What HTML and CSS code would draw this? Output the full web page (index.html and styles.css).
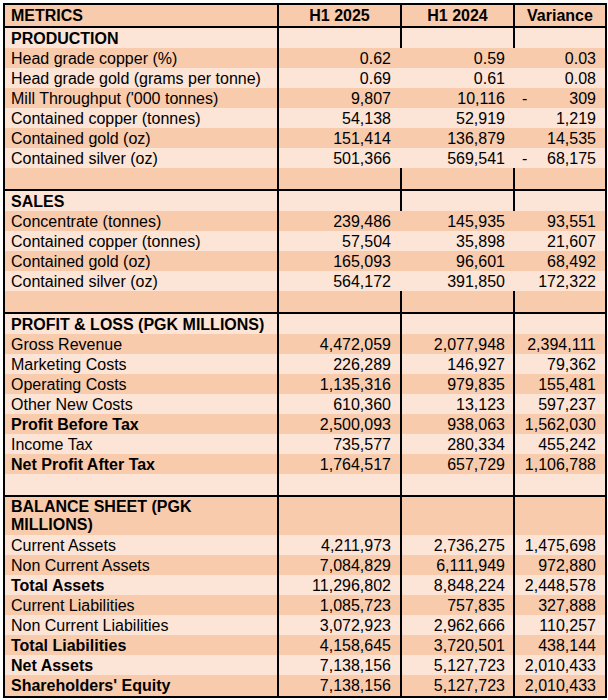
FILE: index.html
```html
<!DOCTYPE html>
<html lang="en">
<head>
<meta charset="utf-8">
<title>Metrics H1 2025 vs H1 2024</title>
<link rel="stylesheet" href="styles.css">
</head>
<body>
<table class="fin">
  <colgroup>
    <col class="c1"><col class="c2"><col class="c3"><col class="c4">
  </colgroup>
  <tbody>
    <tr class="hdr ln"><th class="lbl">METRICS</th><th class="ctr">H1 2025</th><th class="ctr">H1 2024</th><th class="ctr">Variance</th></tr>

    <tr class="sec ln"><td class="lbl b">PRODUCTION</td><td class="num a"></td><td class="num"></td><td class="num v"></td></tr>
    <tr><td class="lbl">Head grade copper (%)</td><td class="num a">0.62</td><td class="num">0.59</td><td class="num v">0.03</td></tr>
    <tr><td class="lbl">Head grade gold (grams per tonne)</td><td class="num a">0.69</td><td class="num">0.61</td><td class="num v">0.08</td></tr>
    <tr><td class="lbl">Mill Throughput ('000 tonnes)</td><td class="num a">9,807</td><td class="num">10,116</td><td class="num v"><span class="neg">-</span>309</td></tr>
    <tr><td class="lbl">Contained copper (tonnes)</td><td class="num a">54,138</td><td class="num">52,919</td><td class="num v">1,219</td></tr>
    <tr><td class="lbl">Contained gold (oz)</td><td class="num a">151,414</td><td class="num">136,879</td><td class="num v">14,535</td></tr>
    <tr><td class="lbl">Contained silver (oz)</td><td class="num a">501,366</td><td class="num">569,541</td><td class="num v"><span class="neg">-</span>68,175</td></tr>
    <tr class="blank ln"><td class="lbl">&nbsp;</td><td class="num a"></td><td class="num"></td><td class="num v"></td></tr>

    <tr class="sec ln"><td class="lbl b">SALES</td><td class="num a"></td><td class="num"></td><td class="num v"></td></tr>
    <tr><td class="lbl">Concentrate (tonnes)</td><td class="num a">239,486</td><td class="num">145,935</td><td class="num v">93,551</td></tr>
    <tr><td class="lbl">Contained copper (tonnes)</td><td class="num a">57,504</td><td class="num">35,898</td><td class="num v">21,607</td></tr>
    <tr><td class="lbl">Contained gold (oz)</td><td class="num a">165,093</td><td class="num">96,601</td><td class="num v">68,492</td></tr>
    <tr><td class="lbl">Contained silver (oz)</td><td class="num a">564,172</td><td class="num">391,850</td><td class="num v">172,322</td></tr>
    <tr class="blank ln"><td class="lbl">&nbsp;</td><td class="num a"></td><td class="num"></td><td class="num v"></td></tr>

    <tr class="sec ln"><td class="lbl b">PROFIT &amp; LOSS (PGK MILLIONS)</td><td class="num a"></td><td class="num"></td><td class="num v"></td></tr>
    <tr class="ln"><td class="lbl">Gross Revenue</td><td class="num a">4,472,059</td><td class="num">2,077,948</td><td class="num v">2,394,111</td></tr>
    <tr class="ln"><td class="lbl">Marketing Costs</td><td class="num a">226,289</td><td class="num">146,927</td><td class="num v">79,362</td></tr>
    <tr class="ln"><td class="lbl">Operating Costs</td><td class="num a">1,135,316</td><td class="num">979,835</td><td class="num v">155,481</td></tr>
    <tr class="ln"><td class="lbl">Other New Costs</td><td class="num a">610,360</td><td class="num">13,123</td><td class="num v">597,237</td></tr>
    <tr class="ln"><td class="lbl b">Profit Before Tax</td><td class="num a">2,500,093</td><td class="num">938,063</td><td class="num v">1,562,030</td></tr>
    <tr class="ln"><td class="lbl">Income Tax</td><td class="num a">735,577</td><td class="num">280,334</td><td class="num v">455,242</td></tr>
    <tr class="ln"><td class="lbl b">Net Profit After Tax</td><td class="num a">1,764,517</td><td class="num">657,729</td><td class="num v">1,106,788</td></tr>
    <tr class="blank ln"><td class="lbl">&nbsp;</td><td class="num a"></td><td class="num"></td><td class="num v"></td></tr>

    <tr class="sec two ln"><td class="lbl b">BALANCE SHEET (PGK<br>MILLIONS)</td><td class="num a"></td><td class="num"></td><td class="num v"></td></tr>
    <tr class="ln"><td class="lbl">Current Assets</td><td class="num a">4,211,973</td><td class="num">2,736,275</td><td class="num v">1,475,698</td></tr>
    <tr class="ln"><td class="lbl">Non Current Assets</td><td class="num a">7,084,829</td><td class="num">6,111,949</td><td class="num v">972,880</td></tr>
    <tr class="ln"><td class="lbl b">Total Assets</td><td class="num a">11,296,802</td><td class="num">8,848,224</td><td class="num v">2,448,578</td></tr>
    <tr class="ln"><td class="lbl">Current Liabilities</td><td class="num a">1,085,723</td><td class="num">757,835</td><td class="num v">327,888</td></tr>
    <tr class="ln"><td class="lbl">Non Current Liabilities</td><td class="num a">3,072,923</td><td class="num">2,962,666</td><td class="num v">110,257</td></tr>
    <tr class="ln"><td class="lbl b">Total Liabilities</td><td class="num a">4,158,645</td><td class="num">3,720,501</td><td class="num v">438,144</td></tr>
    <tr class="ln"><td class="lbl b">Net Assets</td><td class="num a">7,138,156</td><td class="num">5,127,723</td><td class="num v">2,010,433</td></tr>
    <tr class="ln last"><td class="lbl b">Shareholders' Equity</td><td class="num a">7,138,156</td><td class="num">5,127,723</td><td class="num v">2,010,433</td></tr>
  </tbody>
</table>
</body>
</html>
```

FILE: styles.css
```css
html, body {
  margin: 0;
  background: #ffffff;
}

body {
  padding: 3px;
  font-family: "Liberation Sans", Arial, sans-serif;
  font-size: 16px;
  color: #000000;
}

.fin {
  border-collapse: separate;
  border-spacing: 0;
  border: 2px solid #000000;
  table-layout: fixed;
  width: 604px;
}

.c1 { width: 274px; }
.c2 { width: 123px; }
.c3 { width: 113px; }
.c4 { width: 90px; }

.fin th,
.fin td {
  padding: 1px 8px 0 6px;
  line-height: 19px;
  white-space: nowrap;
  overflow: hidden;
  font-weight: normal;
  vertical-align: top;
}

.fin tr:nth-child(odd) th,
.fin tr:nth-child(odd) td {
  background: #f8cbad;
}

.fin tr:nth-child(even) th,
.fin tr:nth-child(even) td {
  background: #fce4d6;
}

.fin th,
.fin .b {
  font-weight: bold;
}

.lbl {
  text-align: left;
  border-right: 2px solid #000000;
}

.num,
.ctr {
  border-right: 2px solid transparent;
}

.num {
  text-align: right;
}

.fin .num.a {
  padding-right: 9px;
}

.fin .num.v {
  border-right: 0;
  padding-left: 7px;
  padding-right: 9px;
}

.fin th.ctr {
  text-align: center;
  padding-left: 0;
  padding-right: 0;
}

.fin th.ctr:last-child {
  border-right: 0;
}

.fin tr.ln .num,
.fin tr.ln .ctr {
  border-right-color: #000000;
}

.fin tr .num.v {
  border-right: 0;
}

.fin tr.hdr th,
.fin tr.blank td {
  padding-bottom: 1px;
  border-bottom: 2px solid #000000;
}

.fin tr.two td {
  line-height: 18px;
  padding-bottom: 1px;
}

.fin tr.last td {
  padding-bottom: 1px;
}

.neg {
  float: left;
}
```
